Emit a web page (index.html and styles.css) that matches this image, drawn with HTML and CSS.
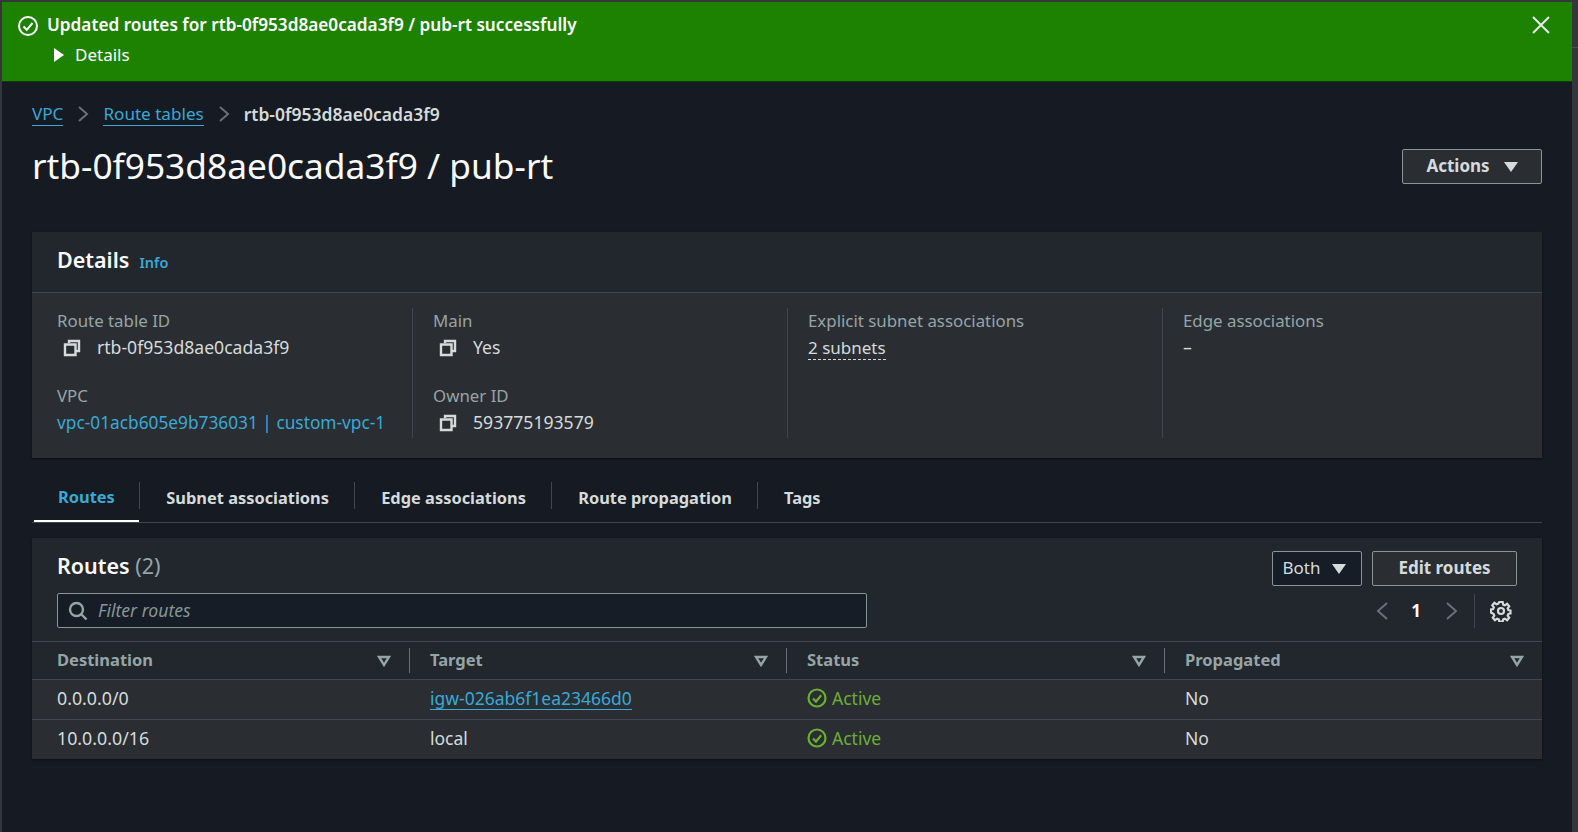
FILE: index.html
```html
<!DOCTYPE html>
<html lang="en">
<head>
  <meta charset="UTF-8">
  <title>rtb-0f953d8ae0cada3f9 / pub-rt</title>
  <link rel="stylesheet" href="styles.css">
</head>
<body>
  <div class="app">
    <div class="flash">
      <svg class="flash-icon" width="22" height="22" viewBox="0 0 22 22"><circle cx="11" cy="11" r="9"/><path d="M6.500 11.500l3.300 3.300 5.700-6.800"/></svg>
      <div class="flash-body">
        <div class="flash-title">Updated routes for rtb-0f953d8ae0cada3f9 / pub-rt successfully</div>
        <div class="flash-details"><span class="tri-right"></span>Details</div>
      </div>
      <svg class="flash-close" width="20" height="20" viewBox="0 0 20 20"><path d="M2 2l16 16M18 2L2 18"/></svg>
    </div>

    <div class="content">
      <nav class="crumbs">
        <a href="#">VPC</a>
        <svg class="crumb-sep" width="12" height="18" viewBox="0 0 12 18"><path d="M2 2l8 7-8 7"/></svg>
        <a href="#">Route tables</a>
        <svg class="crumb-sep" width="12" height="18" viewBox="0 0 12 18"><path d="M2 2l8 7-8 7"/></svg>
        <span class="crumb-current">rtb-0f953d8ae0cada3f9</span>
      </nav>

      <div class="page-head">
        <h1>rtb-0f953d8ae0cada3f9 / pub-rt</h1>
        <button class="btn btn-actions">Actions<span class="caret"></span></button>
      </div>

      <section class="card details">
        <div class="details-head">
          <h2>Details</h2>
          <a class="info" href="#">Info</a>
        </div>
        <div class="details-grid">
          <div class="col">
            <div class="field">
              <div class="label">Route table ID</div>
              <div class="value copy"><svg class="copy-icon" width="18" height="18" viewBox="0 0 18 18"><path d="M6 4V2h10v10h-3"/><path d="M2 5.500h10.500V16H2z"/></svg>rtb-0f953d8ae0cada3f9</div>
            </div>
            <div class="field">
              <div class="label">VPC</div>
              <div class="value"><a href="#">vpc-01acb605e9b736031 | custom-vpc-1</a></div>
            </div>
          </div>
          <div class="col">
            <div class="field">
              <div class="label">Main</div>
              <div class="value copy"><svg class="copy-icon" width="18" height="18" viewBox="0 0 18 18"><path d="M6 4V2h10v10h-3"/><path d="M2 5.500h10.500V16H2z"/></svg>Yes</div>
            </div>
            <div class="field">
              <div class="label">Owner ID</div>
              <div class="value copy"><svg class="copy-icon" width="18" height="18" viewBox="0 0 18 18"><path d="M6 4V2h10v10h-3"/><path d="M2 5.500h10.500V16H2z"/></svg>593775193579</div>
            </div>
          </div>
          <div class="col">
            <div class="field">
              <div class="label">Explicit subnet associations</div>
              <div class="value"><a class="dotted" href="#">2 subnets</a></div>
            </div>
          </div>
          <div class="col">
            <div class="field">
              <div class="label">Edge associations</div>
              <div class="value">–</div>
            </div>
          </div>
        </div>
      </section>

      <div class="tabs">
        <div class="tab active">Routes</div>
        <div class="tab">Subnet associations</div>
        <div class="tab">Edge associations</div>
        <div class="tab">Route propagation</div>
        <div class="tab">Tags</div>
      </div>

      <section class="card routes">
        <div class="routes-top">
          <h2>Routes <span class="count">(2)</span></h2>
          <div class="routes-btns">
            <button class="btn btn-select">Both<span class="caret"></span></button>
            <button class="btn btn-edit">Edit routes</button>
          </div>
        </div>
        <div class="routes-filter">
          <div class="filter">
            <svg class="search-icon" width="20" height="20" viewBox="0 0 20 20"><circle cx="8.500" cy="8.500" r="6.500"/><path d="M13 13l5.500 5.500"/></svg>
            <span>Filter routes</span>
          </div>
          <div class="pager">
            <svg class="pager-arrow" width="14" height="20" viewBox="0 0 14 20"><path d="M12 2L3 10l9 8"/></svg>
            <span class="page-num">1</span>
            <svg class="pager-arrow" width="14" height="20" viewBox="0 0 14 20"><path d="M2 2l9 8-9 8"/></svg>
            <span class="pager-sep"></span>
            <svg class="gear" width="22" height="22" viewBox="0 0 22 22"><circle cx="11" cy="11" r="3"/><path d="M9.300 2h3.400l.5 2.600 1.700.7 2.200-1.500 2.100 2.400-1.500 2.100.7 1.700 2.100.5v3l-2.100.5-.7 1.700 1.500 2.100-2.100 2.400-2.200-1.500-1.700.7-.5 2.100H9.300l-.5-2.100-1.700-.7-2.200 1.500-2.100-2.400 1.500-2.100-.7-1.700L1 12.500v-3l2.100-.5.700-1.700-1.500-2.100 2.100-2.400 2.200 1.500 1.700-.7z"/></svg>
          </div>
        </div>

        <div class="table">
          <div class="row row-head">
            <div class="cell"><span>Destination</span><svg class="sort" width="14" height="12" viewBox="0 0 14 12"><path d="M2 2h10l-5 8z"/></svg></div>
            <div class="cell"><span>Target</span><svg class="sort" width="14" height="12" viewBox="0 0 14 12"><path d="M2 2h10l-5 8z"/></svg></div>
            <div class="cell"><span>Status</span><svg class="sort" width="14" height="12" viewBox="0 0 14 12"><path d="M2 2h10l-5 8z"/></svg></div>
            <div class="cell"><span>Propagated</span><svg class="sort" width="14" height="12" viewBox="0 0 14 12"><path d="M2 2h10l-5 8z"/></svg></div>
          </div>
          <div class="row">
            <div class="cell">0.0.0.0/0</div>
            <div class="cell"><a href="#">igw-026ab6f1ea23466d0</a></div>
            <div class="cell status"><svg class="ok-icon" width="20" height="20" viewBox="0 0 20 20"><circle cx="10" cy="10" r="8.500"/><path d="M6 10.500l3 3 5.200-6.200"/></svg>Active</div>
            <div class="cell">No</div>
          </div>
          <div class="row">
            <div class="cell">10.0.0.0/16</div>
            <div class="cell">local</div>
            <div class="cell status"><svg class="ok-icon" width="20" height="20" viewBox="0 0 20 20"><circle cx="10" cy="10" r="8.500"/><path d="M6 10.500l3 3 5.200-6.200"/></svg>Active</div>
            <div class="cell">No</div>
          </div>
        </div>
      </section>
    </div>
  </div>
</body>
</html>
```

FILE: styles.css
```css
* {
  box-sizing: border-box;
}

html, body {
  margin: 0;
  height: 100%;
  overflow: hidden;
}

body {
  background: #33373c;
  color: #d5dbdb;
  font-family: "Noto Sans", "Liberation Sans", sans-serif;
  font-size: 17px;
  position: relative;
}

/* scrollbar edge at the right of the window */
body::after {
  content: '';
  position: absolute;
  top: 47px;
  right: 0;
  width: 6px;
  height: 1px;
  background: #4b5058;
}

a {
  color: #39a9d6;
  text-decoration: none;
}

svg {
  fill: none;
  flex: none;
}

.app {
  height: 830px;
  margin: 2px 6px 0 2px;
  background: #161a22;
}

/* flash */
.flash {
  display: flex;
  height: 80px;
  padding: 11px 21px 0 15px;
  background: #1d8102;
  color: #fff;
  border-bottom: 1px solid #0f3d04;
}

.flash-icon {
  margin-top: 2px;
  stroke: #fff;
  stroke-width: 2;
}

.flash-body {
  flex: 1;
  margin-left: 8px;
}

.flash-title {
  font-size: 17.200px;
  font-weight: 600;
  line-height: 24px;
}

.flash-details {
  display: flex;
  align-items: center;
  margin-top: 6px;
  line-height: 24px;
}

.tri-right {
  width: 0;
  height: 0;
  margin: 0 11px 0 7px;
  border-top: 7px solid transparent;
  border-bottom: 7px solid transparent;
  border-left: 10px solid #fff;
}

.flash-close {
  margin-top: 2px;
  stroke: #e8ecec;
  stroke-width: 2;
}

/* page head */
.content {
  padding: 0 30px;
}

.crumbs {
  display: flex;
  align-items: center;
  gap: 14px;
  height: 24px;
  margin-top: 20px;
}

.crumbs a {
  font-size: 17.100px;
  border-bottom: 1px solid #39a9d6;
  line-height: 22px;
}

.crumb-sep {
  stroke: #687078;
  stroke-width: 2;
}

.crumb-current {
  font-size: 17.500px;
  font-weight: 600;
}

.page-head {
  display: flex;
  align-items: center;
  justify-content: space-between;
  margin-top: 12px;
  height: 54px;
}

h1 {
  margin: 0;
  color: #fafafa;
  font-size: 35.300px;
  font-weight: 400;
}

.btn {
  display: flex;
  align-items: center;
  justify-content: center;
  height: 35px;
  padding: 0 0 3px;
  border: 1px solid #879596;
  border-radius: 2px;
  background: #2a2e33;
  color: #d5dbdb;
  font-family: inherit;
  font-size: 17px;
  font-weight: 700;
}

.btn-actions {
  width: 140px;
  margin-top: 2px;
  padding-bottom: 1px;
}

.caret {
  width: 0;
  height: 0;
  margin: 3px 0 0 14px;
  border-left: 7px solid transparent;
  border-right: 7px solid transparent;
  border-top: 10px solid #d5dbdb;
}

/* cards */
.card {
  background: #2a2e33;
  box-shadow: 0 1px 2px rgba(0, 0, 0, 0.5);
}

h2 {
  margin: 0;
  color: #fafafa;
  font-size: 21.500px;
  font-weight: 600;
}

.details {
  margin-top: 40px;
  height: 226px;
}

.details-head {
  display: flex;
  align-items: center;
  gap: 10px;
  height: 61px;
  padding: 0 0 5px 25px;
  background: #22262d;
  border-bottom: 1px solid #414750;
}

.info {
  margin-top: 4px;
  font-size: 14.500px;
  font-weight: 600;
}

.details-grid {
  display: grid;
  grid-template-columns: 380px 375px 375px 1fr;
  padding-top: 15px;
}

.col {
  height: 130px;
  padding: 1px 0 0 20px;
  border-left: 1px solid #414750;
}

.col:first-child {
  padding-left: 25px;
  border-left: 0;
}

.field {
  height: 75px;
}

.label {
  color: #95a5a6;
  font-size: 16.850px;
  line-height: 24px;
}

.value {
  display: flex;
  align-items: center;
  font-size: 17.600px;
  line-height: 29px;
  color: #d5dbdb;
}

.value a {
  font-size: 17.300px;
}

.copy-icon {
  margin: 0 16px 0 6px;
  stroke: #d5dbdb;
  stroke-width: 2.400;
}

.value .dotted {
  color: #d5dbdb;
  font-size: 17px;
  border-bottom: 1px dashed #d5dbdb;
  line-height: 22px;
  margin-top: 4px;
}

/* tabs */
.tabs {
  display: flex;
  height: 65px;
  padding-left: 2px;
  border-bottom: 1px solid #414750;
}

.tab {
  display: flex;
  align-items: center;
  height: 100%;
  padding: 14px 25.200px 0 27px;
  font-size: 16.400px;
  font-weight: 700;
  position: relative;
}

.tab + .tab::before {
  content: '';
  position: absolute;
  left: 0;
  top: 24px;
  height: 27px;
  width: 1px;
  background: #414750;
}

.tab.active {
  padding: 14px 24.500px 0 24px;
  color: #39a9d6;
  border-bottom: 2px solid #fff;
}

/* routes */
.routes {
  margin-top: 15px;
  background: #22262d;
}

.routes-top {
  display: flex;
  align-items: center;
  justify-content: space-between;
  padding: 13px 25px 0;
}

.routes-top h2 {
  margin-top: -7px;
}

.count {
  color: #95a5a6;
  font-weight: 400;
}

.routes-btns {
  display: flex;
  gap: 10px;
}

.btn-select {
  width: 90px;
  padding-right: 5px;
  background: #161d26;
  font-weight: 400;
}

.btn-select .caret {
  margin-left: 12px;
}

.btn-edit {
  width: 145px;
}

.routes-filter {
  display: flex;
  align-items: center;
  justify-content: space-between;
  padding: 7px 30px 0 25px;
}

.filter {
  display: flex;
  align-items: center;
  gap: 10px;
  width: 810px;
  height: 35px;
  padding-left: 10px;
  background: #161d26;
  border: 1px solid #879596;
  border-radius: 2px;
  color: #879596;
  font-style: italic;
  font-size: 17.600px;
}

.filter span {
  padding-bottom: 2px;
}

.search-icon {
  stroke: #95a5a6;
  stroke-width: 2.400;
}

.pager {
  display: flex;
  align-items: center;
}

.pager-arrow {
  stroke: #687078;
  stroke-width: 2;
}

.page-num {
  width: 56px;
  padding-right: 2px;
  text-align: center;
  color: #fafafa;
  font-weight: 700;
}

.pager-sep {
  width: 1px;
  height: 34px;
  margin: 0 15px;
  background: #414750;
}

.gear {
  stroke: #d5dbdb;
  stroke-width: 2.200;
}

.table {
  margin-top: 13px;
}

.row {
  display: grid;
  grid-template-columns: 377px 377px 378px 1fr;
  height: 40px;
  padding-bottom: 3px;
  background: #2a2e33;
  border-top: 1px solid #414750;
}

.row-head {
  height: 38px;
  padding-bottom: 2px;
  background: #22262d;
}

.cell {
  display: flex;
  align-items: center;
  padding-left: 21px;
  font-size: 17.500px;
  color: #d5dbdb;
}

.cell:first-child {
  padding-left: 25px;
  font-size: 17.800px;
}

.row-head .cell {
  justify-content: space-between;
  padding-right: 18px;
  font-size: 16.500px;
  font-weight: 700;
  color: #95a5a6;
  position: relative;
}

.row-head .cell + .cell::before {
  content: '';
  position: absolute;
  left: 0;
  top: 6px;
  height: 25px;
  width: 1px;
  background: #687078;
}

.sort {
  margin-top: 2px;
  stroke: #95a5a6;
  stroke-width: 2.400;
}

.cell a {
  border-bottom: 1px solid #39a9d6;
  line-height: 22px;
}

.status {
  gap: 5px;
  color: #6aaf35;
}

.ok-icon {
  stroke: #6aaf35;
  stroke-width: 2.200;
}
```
